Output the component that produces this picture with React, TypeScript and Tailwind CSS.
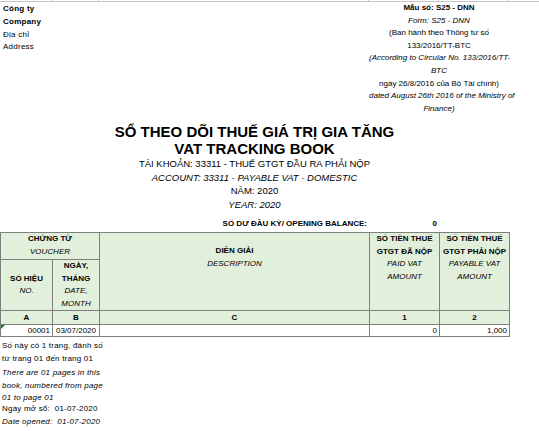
const cols = [52, 47, 270, 70, 70];

export default function App() {
  return (
    <div
      className="relative w-[539px] h-[431px] overflow-hidden bg-white text-black text-[8px] leading-[12.6px]"
      style={{ fontFamily: '"Liberation Sans", Arial, sans-serif' }}
    >
      {/* sheet gridline at the top edge */}
      <div className="flex h-[2px]">
        {cols.map((w, i) => (
          <div key={i} className="h-full border-r border-b border-[#c6c6c6]" style={{ width: w }} />
        ))}
        <div className="h-full flex-1 border-b border-[#c6c6c6]" />
      </div>

      {/* header: company + form number */}
      <div className="flex h-[115px]">
        <div className="w-[369px] pl-[3px] pt-[1px] tracking-[0.25px] leading-[12.8px]">
          <div className="font-bold">Công ty</div>
          <div className="font-bold">Company</div>
          <div>Địa chỉ</div>
          <div>Address</div>
        </div>
        <div className="w-[140px] text-center whitespace-nowrap">
          <div className="font-bold">Mẫu số: S25 - DNN</div>
          <div className="italic">Form: S25 - DNN</div>
          <div>(Ban hành theo Thông tư số</div>
          <div>133/2016/TT-BTC</div>
          <div className="italic">(According to Circular No. 133/2016/TT-</div>
          <div className="italic">BTC</div>
          <div>ngày 26/8/2016 của Bộ Tài chính)</div>
          <div className="italic">dated August 26th 2016 of the Ministry of</div>
          <div className="italic">Finance)</div>
        </div>
      </div>

      {/* title */}
      <div className="w-[509px] text-center">
        <div className="font-bold text-[15px] leading-[17px] mt-[6px]">SỔ THEO DÕI THUẾ GIÁ TRỊ GIA TĂNG</div>
        <div className="font-bold text-[15px] leading-[17px]">VAT TRACKING BOOK</div>
        <div className="text-[9.5px] leading-[13.5px]">TÀI KHOẢN: 33311 - THUẾ GTGT ĐẦU RA PHẢI NỘP</div>
        <div className="italic text-[9.5px] leading-[13.5px]">ACCOUNT: 33311 - PAYABLE VAT - DOMESTIC</div>
        <div className="text-[9.5px] leading-[13.5px]">NĂM: 2020</div>
        <div className="italic text-[9.5px] leading-[13.5px]">YEAR: 2020</div>
      </div>

      {/* opening balance */}
      <div className="flex w-[509px] mt-[7px] h-[13px] font-bold">
        <div className="w-[369px] text-right pr-[2px]">SỐ DƯ ĐẦU KỲ/ OPENING BALANCE:</div>
        <div className="w-[70px] text-right pr-[2px]">0</div>
      </div>

      {/* ledger table */}
      <table className="border-collapse table-fixed w-[510px] mt-[1px]">
        <colgroup>
          {cols.map((w, i) => (
            <col key={i} style={{ width: w }} />
          ))}
        </colgroup>
        <tbody>
          <tr className="h-[27px] bg-[#e2efda]">
            <td colSpan={2} className="border border-[#7f7f7f] text-center align-middle">
              <div className="font-bold">CHỨNG TỪ</div>
              <div className="italic">VOUCHER</div>
            </td>
            <td rowSpan={2} className="border border-[#7f7f7f] text-center align-top pt-[12px]">
              <div className="font-bold">DIỄN GIẢI</div>
              <div className="italic">DESCRIPTION</div>
            </td>
            <td rowSpan={2} className="border border-[#7f7f7f] text-center align-top pt-0">
              <div className="font-bold">SỐ TIỀN THUẾ</div>
              <div className="font-bold">GTGT ĐÃ NỘP</div>
              <div className="italic">PAID VAT</div>
              <div className="italic">AMOUNT</div>
            </td>
            <td rowSpan={2} className="border border-[#7f7f7f] text-center align-top pt-0">
              <div className="font-bold">SỐ TIỀN THUẾ</div>
              <div className="font-bold">GTGT PHẢI NỘP</div>
              <div className="italic">PAYABLE VAT</div>
              <div className="italic">AMOUNT</div>
            </td>
          </tr>
          <tr className="h-[51px] bg-[#e2efda]">
            <td className="border border-[#7f7f7f] text-center align-middle">
              <div className="font-bold">SỐ HIỆU</div>
              <div className="italic">NO.</div>
            </td>
            <td className="border border-[#7f7f7f] text-center align-middle">
              <div className="font-bold">NGÀY,</div>
              <div className="font-bold">THÁNG</div>
              <div className="italic">DATE,</div>
              <div className="italic">MONTH</div>
            </td>
          </tr>
          <tr className="h-[14px] bg-[#e2efda] font-bold text-center">
            <td className="border border-[#7f7f7f]">A</td>
            <td className="border border-[#7f7f7f]">B</td>
            <td className="border border-[#7f7f7f]">C</td>
            <td className="border border-[#7f7f7f]">1</td>
            <td className="border border-[#7f7f7f]">2</td>
          </tr>
          <tr className="h-[12px] leading-[11px]">
            <td className="relative border border-[#7f7f7f] text-right pr-[2px]">
              <span className="absolute left-0 top-0 w-0 h-0 border-t-[4px] border-r-[4px] border-t-[#1f7a1f] border-r-transparent" />
              00001
            </td>
            <td className="border border-[#7f7f7f] text-center">03/07/2020</td>
            <td className="border border-[#7f7f7f]" />
            <td className="border border-[#7f7f7f] text-right pr-[2px]">0</td>
            <td className="border border-[#7f7f7f] text-right pr-[2px]">1,000</td>
          </tr>
        </tbody>
      </table>

      {/* footer notes */}
      <div className="pl-[2px] mt-[3px] whitespace-nowrap tracking-[0.2px] leading-[12.4px]">
        <div>Số này có 1 trang, đánh số</div>
        <div>từ trang 01 đến trang 01</div>
        <div className="italic mt-[2px]">There are 01 pages in this</div>
        <div className="italic">book, numbered from page</div>
        <div className="italic leading-[11px]">01 to page 01</div>
        <div>Ngày mở sổ:&nbsp; 01-07-2020</div>
        <div className="italic mt-[1px]">Date opened:&nbsp; 01-07-2020</div>
      </div>
    </div>
  );
}
